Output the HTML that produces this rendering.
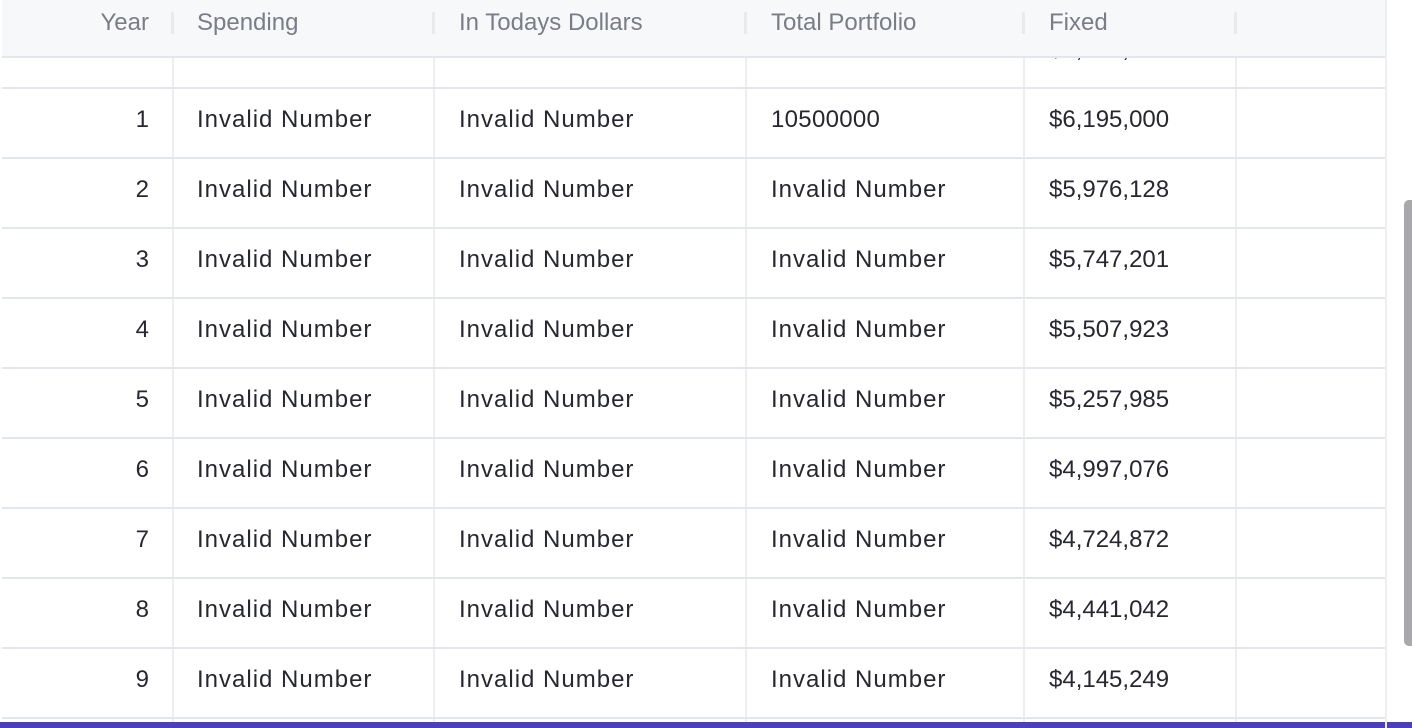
<!DOCTYPE html>
<html><head><meta charset="utf-8"><style>
body{margin:0;width:1412px;height:728px;overflow:hidden;background:#fff;font-family:"Liberation Sans",sans-serif;position:relative}
.t{position:absolute;left:2px;top:0;width:1385px;height:728px;overflow:hidden}
.row{position:absolute;left:0;width:1385px;height:70px;border-top:2px solid #e4e6ee;box-sizing:border-box}
.c{position:absolute;top:0;height:68px;font-size:24px;color:#262730;line-height:62px;white-space:nowrap}
.c.a,.c.b,.c.d{letter-spacing:1px}
.v{position:absolute;top:0;height:70px;width:2px;background:#eceef2}
.hdr{position:absolute;left:0;top:0;width:1385px;height:58px;background:#f7f8fa;border-bottom:2px solid #e4e6ee;box-sizing:border-box;z-index:2}
.h{position:absolute;top:0;font-size:24px;color:#7a7d87;line-height:46px}
.hd{position:absolute;top:12px;height:22px;width:3px;background:#e8eaee}
.y{right:1238px}.a{left:195px}.b{left:457px}.d{left:769px}.e{left:1047px}
.v1{left:170px}.v2{left:431px}.v3{left:743px}.v4{left:1021px}.v5{left:1233px}
</style></head><body>
<div class="t">
<div class="hdr">
<div class="h y">Year</div>
<div class="hd" style="left:169px"></div>
<div class="h a">Spending</div>
<div class="hd" style="left:430px"></div>
<div class="h b">In Todays Dollars</div>
<div class="hd" style="left:742px"></div>
<div class="h d">Total Portfolio</div>
<div class="hd" style="left:1020px"></div>
<div class="h e">Fixed</div>
<div class="hd" style="left:1232px"></div>
</div>

<div class="row" style="top:17px"><div class="c e">$6,414,000</div><div class="v v1"></div><div class="v v2"></div><div class="v v3"></div><div class="v v4"></div><div class="v v5"></div></div>
<div class="row" style="top:87px"><div class="c y">1</div><div class="c a">Invalid Number</div><div class="c b">Invalid Number</div><div class="c d" style="letter-spacing:0.3px">10500000</div><div class="c e">$6,195,000</div><div class="v v1"></div><div class="v v2"></div><div class="v v3"></div><div class="v v4"></div><div class="v v5"></div></div>
<div class="row" style="top:157px"><div class="c y">2</div><div class="c a">Invalid Number</div><div class="c b">Invalid Number</div><div class="c d">Invalid Number</div><div class="c e">$5,976,128</div><div class="v v1"></div><div class="v v2"></div><div class="v v3"></div><div class="v v4"></div><div class="v v5"></div></div>
<div class="row" style="top:227px"><div class="c y">3</div><div class="c a">Invalid Number</div><div class="c b">Invalid Number</div><div class="c d">Invalid Number</div><div class="c e">$5,747,201</div><div class="v v1"></div><div class="v v2"></div><div class="v v3"></div><div class="v v4"></div><div class="v v5"></div></div>
<div class="row" style="top:297px"><div class="c y">4</div><div class="c a">Invalid Number</div><div class="c b">Invalid Number</div><div class="c d">Invalid Number</div><div class="c e">$5,507,923</div><div class="v v1"></div><div class="v v2"></div><div class="v v3"></div><div class="v v4"></div><div class="v v5"></div></div>
<div class="row" style="top:367px"><div class="c y">5</div><div class="c a">Invalid Number</div><div class="c b">Invalid Number</div><div class="c d">Invalid Number</div><div class="c e">$5,257,985</div><div class="v v1"></div><div class="v v2"></div><div class="v v3"></div><div class="v v4"></div><div class="v v5"></div></div>
<div class="row" style="top:437px"><div class="c y">6</div><div class="c a">Invalid Number</div><div class="c b">Invalid Number</div><div class="c d">Invalid Number</div><div class="c e">$4,997,076</div><div class="v v1"></div><div class="v v2"></div><div class="v v3"></div><div class="v v4"></div><div class="v v5"></div></div>
<div class="row" style="top:507px"><div class="c y">7</div><div class="c a">Invalid Number</div><div class="c b">Invalid Number</div><div class="c d">Invalid Number</div><div class="c e">$4,724,872</div><div class="v v1"></div><div class="v v2"></div><div class="v v3"></div><div class="v v4"></div><div class="v v5"></div></div>
<div class="row" style="top:577px"><div class="c y">8</div><div class="c a">Invalid Number</div><div class="c b">Invalid Number</div><div class="c d">Invalid Number</div><div class="c e">$4,441,042</div><div class="v v1"></div><div class="v v2"></div><div class="v v3"></div><div class="v v4"></div><div class="v v5"></div></div>
<div class="row" style="top:647px"><div class="c y">9</div><div class="c a">Invalid Number</div><div class="c b">Invalid Number</div><div class="c d">Invalid Number</div><div class="c e">$4,145,249</div><div class="v v1"></div><div class="v v2"></div><div class="v v3"></div><div class="v v4"></div><div class="v v5"></div></div>
<div class="row" style="top:717px;height:11px"><div class="v v1"></div><div class="v v2"></div><div class="v v3"></div><div class="v v4"></div><div class="v v5"></div></div>

<div style="position:absolute;left:1383px;top:0;width:2px;height:728px;background:#eceef2;z-index:3"></div>
</div>
<div style="position:absolute;left:1404px;top:200px;width:8px;height:446px;background:#a9a9ad;border-radius:5px 0 0 5px"></div>
<div style="position:absolute;left:0;top:722px;width:1412px;height:6px;background:#4b3ebf"></div>
</body></html>
